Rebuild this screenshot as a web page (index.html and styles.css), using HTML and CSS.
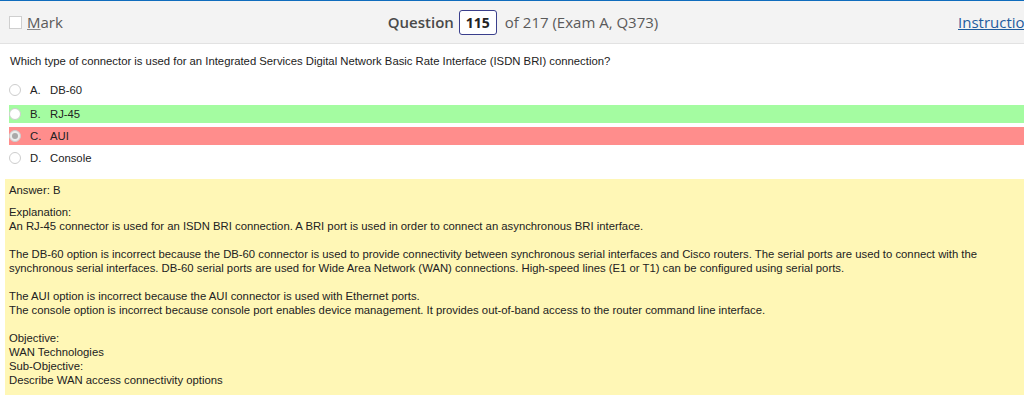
FILE: index.html
```html
<!DOCTYPE html>
<html>
<head>
<meta charset="utf-8">
<title>Question 115</title>
<link rel="stylesheet" href="styles.css">
</head>
<body>
<div class="topbar">
  <label class="mark"><span class="box"></span><span><u>M</u>ark</span></label>
  <div class="counter">
    <span class="qlabel">Question</span>
    <span class="qnum">115</span>
    <span class="qof">of 217 (Exam A, Q373)</span>
  </div>
  <a class="instr" href="#">Instructions</a>
</div>

<div class="question">
  <p class="stem">Which type of connector is used for an Integrated Services Digital Network Basic Rate Interface (ISDN BRI) connection?</p>
  <div class="opt first"><span class="radio"></span><span class="letter">A.</span><span>DB-60</span></div>
  <div class="opt right"><span class="radio"></span><span class="letter">B.</span><span>RJ-45</span></div>
  <div class="opt wrong"><span class="radio checked"></span><span class="letter">C.</span><span>AUI</span></div>
  <div class="opt"><span class="radio"></span><span class="letter">D.</span><span>Console</span></div>
</div>

<div class="answer">
  <div class="ans">Answer: B</div>
  <div class="expl">
Explanation:<br>
An RJ-45 connector is used for an ISDN BRI connection. A BRI port is used in order to connect an asynchronous BRI interface.<br>
<br>
The DB-60 option is incorrect because the DB-60 connector is used to provide connectivity between synchronous serial interfaces and Cisco routers. The serial ports are used to connect with the synchronous serial interfaces. DB-60 serial ports are used for Wide Area Network (WAN) connections. High-speed lines (E1 or T1) can be configured using serial ports.<br>
<br>
The AUI option is incorrect because the AUI connector is used with Ethernet ports.<br>
The console option is incorrect because console port enables device management. It provides out-of-band access to the router command line interface.<br>
<br>
Objective:<br>
WAN Technologies<br>
Sub-Objective:<br>
Describe WAN access connectivity options
  </div>
</div>
</body>
</html>
```
FILE: styles.css
```css
body {
  margin: 0;
  background: white;
  font-family: "Liberation Sans", Arial, sans-serif;
  font-size: 11.3px;
  color: #222;
  overflow: hidden;
}

.topbar {
  display: grid;
  grid-template-columns: 1fr auto 1fr;
  align-items: center;
  height: 42px;
  background: #f3f3f3;
  border-top: 1px solid #0f6cbd;
  border-bottom: 1px solid #e2e2e2;
  font-family: "Open Sans", "Noto Sans", sans-serif;
  font-size: 15px;
  color: #5a5a5a;
}

.mark {
  display: flex;
  align-items: center;
  gap: 5px;
  padding-left: 9px;
}
.mark u {
  text-decoration-color: #888;
}
.box {
  width: 11px;
  height: 11px;
  border: 1px solid #cfcfcf;
  background: white;
}

.counter {
  display: flex;
  align-items: center;
  padding-left: 22px;
}
.qlabel {
  font-weight: 600;
  color: #4a4a4a;
}
.qnum {
  margin: 0 8px 0 5px;
  padding: 1px 6px;
  border: 1px solid #3a3f8c;
  border-radius: 3px;
  background: white;
  font-weight: 700;
  font-size: 14px;
  color: #222;
  line-height: 21px;
}

.instr {
  justify-self: end;
  width: 66px;
  overflow: hidden;
  white-space: nowrap;
  color: #1f5c9e;
  text-decoration: underline;
}

.question {
  padding: 11px 0 0 0;
}
.stem {
  margin: 0 0 14px 10px;
}
.opt {
  display: flex;
  align-items: center;
  height: 18px;
  margin: 0 0 4px 9px;
}
.opt.first {
  margin-bottom: 6px;
}
.opt.right {
  background: #a4fca1;
}
.opt.wrong {
  background: #ff8d8c;
}
.radio {
  box-sizing: border-box;
  width: 12px;
  height: 12px;
  border: 1px solid #cdcdcd;
  border-radius: 50%;
  background: white;
  margin-right: 9px;
  position: relative;
}
.radio.checked {
  background: #ececec;
}
.radio.checked::after {
  content: "";
  position: absolute;
  left: 2px;
  top: 2px;
  width: 6px;
  height: 6px;
  border-radius: 50%;
  background: #a9a9a9;
}
.letter {
  width: 20px;
}

.answer {
  margin: 12px 0 0 5px;
  padding: 4px 4px 12px 4px;
  background: #fff7b6;
  height: 200px;
  line-height: 14px;
}
.ans {
  margin-bottom: 8px;
}
```
